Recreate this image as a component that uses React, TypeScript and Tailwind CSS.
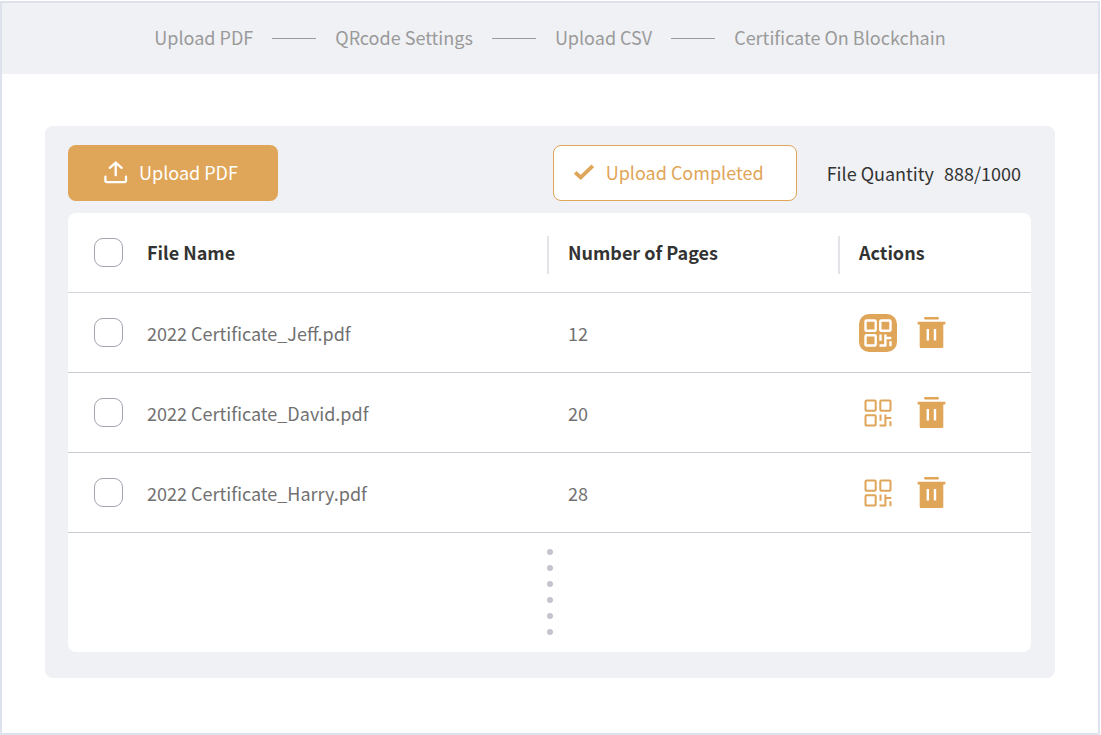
const steps = ["Upload PDF", "QRcode Settings", "Upload CSV", "Certificate On Blockchain"];

const files = [
  { name: "2022 Certificate_Jeff.pdf", pages: 12, active: true },
  { name: "2022 Certificate_David.pdf", pages: 20, active: false },
  { name: "2022 Certificate_Harry.pdf", pages: 28, active: false },
];

function UploadIcon() {
  return (
    <svg width="24" height="24" viewBox="0 0 24 24" fill="none" stroke="currentColor" strokeWidth="2.3" strokeLinecap="round" strokeLinejoin="round" aria-hidden="true">
      <path d="M11.7 15.3V2.9M5.8 7.9L11.7 2.5L17.6 7.9" />
      <path d="M1.4 16.7V20.6C1.4 21.6 1.9 22.1 2.9 22.1H20.5C21.5 22.1 22 21.6 22 20.6V16.7" />
    </svg>
  );
}

function CheckIcon() {
  return (
    <svg width="20" height="16" viewBox="0 0 20 16" fill="none" stroke="currentColor" strokeWidth="3.8" aria-hidden="true">
      <path d="M1.2 8.4L6.8 13.4L18.8 1.8" />
    </svg>
  );
}

function QrIcon({ bold }: { bold: boolean }) {
  return (
    <svg width="28" height="28" viewBox="0 0 28 28" fill="none" stroke="currentColor" strokeWidth={bold ? 2.4 : 2} strokeLinejoin="round" aria-hidden="true">
      <rect x="1.5" y="1.5" width="10.2" height="10.2" rx="1" />
      <rect x="16.3" y="1.5" width="10.2" height="10.2" rx="1" />
      <rect x="1.5" y="16.3" width="10.2" height="10.2" rx="1" />
      <path d="M16.5 15.5V21.8M15.5 26.5H21.4V15.5M21.4 19H27.3M26.5 22.3V27.3" />
    </svg>
  );
}

function TrashIcon() {
  return (
    <svg width="29" height="31" viewBox="0 0 29 31" fill="currentColor" aria-hidden="true">
      <rect x="7.2" y="0" width="14.6" height="2.6" rx="0.8" />
      <path fillRule="evenodd" d="M0.6 4.8H28.4V7.4H26.3V29.8Q26.3 31 25.1 31H3.9Q2.7 31 2.7 29.8V7.4H0.6ZM9.6 12V23.6H12V12ZM16.8 12V23.6H19.2V12Z" />
    </svg>
  );
}

function Checkbox({ label }: { label: string }) {
  return (
    <input
      type="checkbox"
      aria-label={label}
      className="block size-[29px] appearance-none rounded-[9px] border border-[#a3a6b0] bg-white checked:bg-[#dfa558]"
    />
  );
}

export default function App() {
  return (
    <div className="min-h-screen bg-white pt-px pr-px font-['Noto_Sans_CJK_SC',sans-serif] text-lg leading-7">
      <div className="min-h-[734px] border-2 border-[#dde2ec]">
        <nav aria-label="Steps" className="bg-[#f0f1f5]">
          <ol className="flex h-[71px] items-center justify-center gap-[19px] pb-1 text-[#9a9a9a]">
            {steps.map((step, i) => (
              <li key={step} className="flex items-center gap-[19px] whitespace-nowrap">
                {i > 0 && <span className="mt-1 h-px w-11 bg-[#9c9c9c]" />}
                <span>{step}</span>
              </li>
            ))}
          </ol>
        </nav>

        <main className="mx-[43px] mt-[52px] rounded-lg bg-[#f0f1f5] pt-[19px] pr-6 pb-[26px] pl-[23px]">
          <div className="flex items-center">
            <button type="button" className="flex h-14 w-[210px] items-center justify-center gap-[11px] rounded-lg bg-[#dfa558] pr-1 pb-0.5 text-white">
              <UploadIcon />
              Upload PDF
            </button>
            <button type="button" className="ml-auto flex h-14 w-[244px] items-center gap-3 rounded-lg border border-[#dfa558] bg-white px-5 pb-0.5 whitespace-nowrap text-[#dfa558]">
              <CheckIcon />
              Upload Completed
            </button>
            <p className="ml-[30px] flex gap-2.5 pr-2.5 text-[#333]">
              <span>File Quantity</span>
              <span>888/1000</span>
            </p>
          </div>

          <div className="mt-3 rounded-lg bg-white">
            <table className="w-full table-fixed border-separate border-spacing-0 text-left">
              <colgroup>
                <col className="w-[79px]" />
                <col />
                <col className="w-[291px]" />
                <col className="w-[193px]" />
              </colgroup>
              <thead className="text-[#333]">
                <tr className="[&>th]:h-20 [&>th]:border-b [&>th]:border-[#d4d5dc] [&>th]:p-0">
                  <th>
                    <div className="pl-[26px]"><Checkbox label="Select all files" /></div>
                  </th>
                  <th className="font-bold"><div className="pb-0.5">File Name</div></th>
                  <th className="font-bold">
                    <div className="mt-1 flex h-[38px] items-center border-l-2 border-[#e3e4e8] pb-1.5 pl-[19px]">Number of Pages</div>
                  </th>
                  <th className="font-bold">
                    <div className="mt-1 flex h-[38px] items-center border-l-2 border-[#e3e4e8] pb-1.5 pl-[19px]">Actions</div>
                  </th>
                </tr>
              </thead>
              <tbody className="text-[#717171]">
                {files.map((file) => (
                  <tr key={file.name} className="[&>td]:h-20 [&>td]:border-b [&>td]:border-[#c9cad2] [&>td]:p-0">
                    <td>
                      <div className="pl-[26px]"><Checkbox label={`Select ${file.name}`} /></div>
                    </td>
                    <td>{file.name}</td>
                    <td><div className="pl-[21px]">{file.pages}</div></td>
                    <td>
                      <div className="flex items-center gap-5 pl-[21px] text-[#dfa558]">
                        <button
                          type="button"
                          aria-label={`QR code of ${file.name}`}
                          className={`grid size-[38px] place-items-center rounded-[10px] ${file.active ? "bg-[#dfa558] text-white" : ""}`}
                        >
                          <QrIcon bold={file.active} />
                        </button>
                        <button type="button" aria-label={`Delete ${file.name}`}>
                          <TrashIcon />
                        </button>
                      </div>
                    </td>
                  </tr>
                ))}
              </tbody>
            </table>
            <div className="flex flex-col items-center gap-2.5 pt-4 pb-[17px]">
              {[0, 1, 2, 3, 4, 5].map((dot) => (
                <span key={dot} className="size-1.5 rounded-full bg-[#c3c6cc]" />
              ))}
            </div>
          </div>
        </main>
      </div>
    </div>
  );
}
